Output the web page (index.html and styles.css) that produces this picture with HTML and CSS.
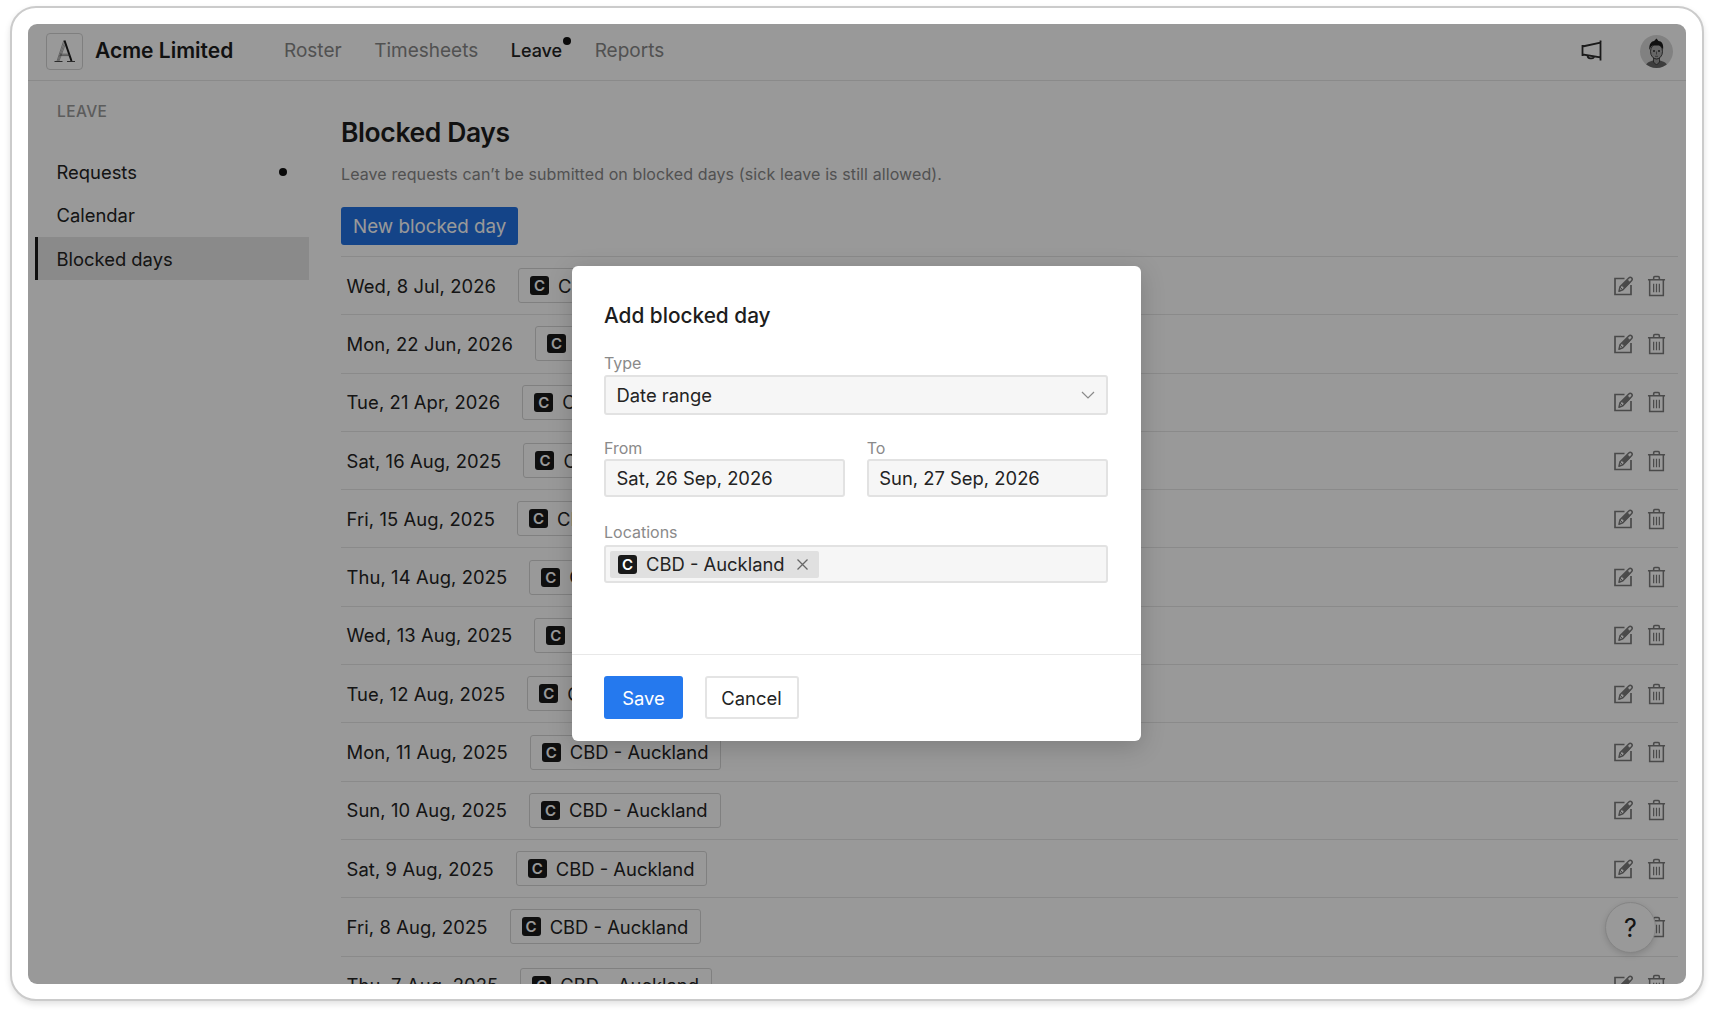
FILE: index.html
```html
<!DOCTYPE html>
<html lang="en">
<head>
<meta charset="utf-8">
<title>Blocked Days</title>
<link rel="stylesheet" href="styles.css">
</head>
<body>
<svg class="sprites" width="0" height="0">
  <symbol id="edit" viewBox="0 0 20 20">
    <path d="M10.500 2.500H1v16h16V9" fill="none" stroke="currentColor" stroke-width="1.700"/>
    <path d="M5 15.200l1-4.400L14.800 2c.9-.9 2-.9 2.800-.1.8.8.8 1.900-.1 2.800L8.900 13.700z" fill="none" stroke="currentColor" stroke-width="1.500" stroke-linejoin="round"/>
    <path d="M6 11l3 3M8 9.500l2.500 2.500 5.500-5.500-2.500-2.500z" fill="currentColor" stroke="currentColor" stroke-width="1"/>
  </symbol>
  <symbol id="trash" viewBox="0 0 20 22">
    <path d="M1 4.500h18M7 4.500V2.200C7 1.500 7.500 1 8.200 1h3.600c.7 0 1.200.5 1.200 1.200v2.300M2.800 4.500v16.500h14.400V4.500" fill="none" stroke="currentColor" stroke-width="1.600"/>
    <path d="M7 8.500v9M10 8.500v9M13 8.500v9" fill="none" stroke="currentColor" stroke-width="1.300"/>
  </symbol>
</svg>
<div class="frame">
  <div class="app">
    <header class="topbar">
      <div class="logo">
        <svg width="25" height="27" viewBox="0 0 25 27">
          <path d="M11.800 2.500L5 23M13.200 6.500L7 23M12.500 4.500L6 23" fill="none" stroke="#555" stroke-width=".5"/>
          <path d="M12.500 2.500L19.500 23" fill="none" stroke="#1c1c1c" stroke-width="2"/>
          <path d="M8 16.200h9.500M7.500 17.600h10.500" fill="none" stroke="#444" stroke-width=".6"/>
          <path d="M2.500 23.500h8M15 23.500h8" fill="none" stroke="#333" stroke-width=".9"/>
        </svg>
      </div>
      <div class="brand">Acme Limited</div>
      <nav class="nav">
        <a class="nav-link">Roster</a>
        <a class="nav-link">Timesheets</a>
        <a class="nav-link nav-current">Leave<span class="nav-dot"></span></a>
        <a class="nav-link">Reports</a>
      </nav>
      <svg class="megaphone" width="21" height="21" viewBox="0 0 21 21">
        <path d="M1.500 6.500L19.500 2.500v15L1.500 14.500zM1.500 5v11M19.500.5v20M6.500 15.800c.3 2.800 5 3.600 6.500 1.200" fill="none" stroke="#2c2c2c" stroke-width="1.800"/>
      </svg>
      <div class="avatar">
        <svg width="33" height="33" viewBox="0 0 33 33">
          <path d="M5 33c.5-5 4-6.500 8-7.500h7c4 1 7.500 2.500 8 7.500z" fill="#666"/>
          <path d="M13.500 22v5l3 3 3-3v-5z" fill="#999" stroke="#222" stroke-width=".7"/>
          <ellipse cx="16.500" cy="16.500" rx="6" ry="7.500" fill="#aaa" stroke="#222" stroke-width=".8"/>
          <path d="M9.500 15c-1-6 2.500-9 4.500-9l2.500-2.500 2 2.500c3 0 5.500 3 4.500 9-1-2.500-2-4-4-4.500h-6c-2 .5-2.500 2-3.500 4.500z" fill="#1c1c1c"/>
          <circle cx="14" cy="16" r=".9" fill="#222"/><circle cx="19" cy="16" r=".9" fill="#222"/>
          <path d="M16.500 16.500v3M15 21.300h3" stroke="#333" stroke-width=".6" fill="none"/>
        </svg>
      </div>
    </header>
    <div class="body">
      <aside class="sidebar">
        <div class="side-title">LEAVE</div>
        <a class="side-item">Requests<span class="side-dot"></span></a>
        <a class="side-item">Calendar</a>
        <a class="side-item side-active">Blocked days</a>
      </aside>
      <main class="main">
        <h1 class="title">Blocked Days</h1>
        <p class="subtitle">Leave requests can’t be submitted on blocked days (sick leave is still allowed).</p>
        <button class="new-btn">New blocked day</button>
        <div class="rows">
          <div class="row"><span class="date">Wed, 8 Jul, 2026</span><span class="tag"><b class="badge">C</b>CBD - Auckland</span><span class="actions"><svg class="ic-edit"><use href="#edit"/></svg><svg class="ic-trash"><use href="#trash"/></svg></span></div>
          <div class="row"><span class="date">Mon, 22 Jun, 2026</span><span class="tag"><b class="badge">C</b>CBD - Auckland</span><span class="actions"><svg class="ic-edit"><use href="#edit"/></svg><svg class="ic-trash"><use href="#trash"/></svg></span></div>
          <div class="row"><span class="date">Tue, 21 Apr, 2026</span><span class="tag"><b class="badge">C</b>CBD - Auckland</span><span class="actions"><svg class="ic-edit"><use href="#edit"/></svg><svg class="ic-trash"><use href="#trash"/></svg></span></div>
          <div class="row"><span class="date">Sat, 16 Aug, 2025</span><span class="tag"><b class="badge">C</b>CBD - Auckland</span><span class="actions"><svg class="ic-edit"><use href="#edit"/></svg><svg class="ic-trash"><use href="#trash"/></svg></span></div>
          <div class="row"><span class="date">Fri, 15 Aug, 2025</span><span class="tag"><b class="badge">C</b>CBD - Auckland</span><span class="actions"><svg class="ic-edit"><use href="#edit"/></svg><svg class="ic-trash"><use href="#trash"/></svg></span></div>
          <div class="row"><span class="date">Thu, 14 Aug, 2025</span><span class="tag"><b class="badge">C</b>CBD - Auckland</span><span class="actions"><svg class="ic-edit"><use href="#edit"/></svg><svg class="ic-trash"><use href="#trash"/></svg></span></div>
          <div class="row"><span class="date">Wed, 13 Aug, 2025</span><span class="tag"><b class="badge">C</b>CBD - Auckland</span><span class="actions"><svg class="ic-edit"><use href="#edit"/></svg><svg class="ic-trash"><use href="#trash"/></svg></span></div>
          <div class="row"><span class="date">Tue, 12 Aug, 2025</span><span class="tag"><b class="badge">C</b>CBD - Auckland</span><span class="actions"><svg class="ic-edit"><use href="#edit"/></svg><svg class="ic-trash"><use href="#trash"/></svg></span></div>
          <div class="row"><span class="date">Mon, 11 Aug, 2025</span><span class="tag"><b class="badge">C</b>CBD - Auckland</span><span class="actions"><svg class="ic-edit"><use href="#edit"/></svg><svg class="ic-trash"><use href="#trash"/></svg></span></div>
          <div class="row"><span class="date">Sun, 10 Aug, 2025</span><span class="tag"><b class="badge">C</b>CBD - Auckland</span><span class="actions"><svg class="ic-edit"><use href="#edit"/></svg><svg class="ic-trash"><use href="#trash"/></svg></span></div>
          <div class="row"><span class="date">Sat, 9 Aug, 2025</span><span class="tag"><b class="badge">C</b>CBD - Auckland</span><span class="actions"><svg class="ic-edit"><use href="#edit"/></svg><svg class="ic-trash"><use href="#trash"/></svg></span></div>
          <div class="row"><span class="date">Fri, 8 Aug, 2025</span><span class="tag"><b class="badge">C</b>CBD - Auckland</span><span class="actions"><svg class="ic-edit"><use href="#edit"/></svg><svg class="ic-trash"><use href="#trash"/></svg></span></div>
          <div class="row"><span class="date">Thu, 7 Aug, 2025</span><span class="tag"><b class="badge">C</b>CBD - Auckland</span><span class="actions"><svg class="ic-edit"><use href="#edit"/></svg><svg class="ic-trash"><use href="#trash"/></svg></span></div>
        </div>
      </main>
    </div>
    <button class="help">?</button>
    <div class="overlay">
      <section class="modal">
        <div class="modal-body">
          <h2 class="modal-title">Add blocked day</h2>
          <label class="field-label">Type</label>
          <div class="control control-select">Date range
            <svg class="chevron" width="14" height="8" viewBox="0 0 14 8"><path d="M1 1l6 6 6-6" fill="none" stroke="#8a8a8a" stroke-width="1.200"/></svg>
          </div>
          <div class="two-col">
            <div class="col">
              <label class="field-label field-date">From</label>
              <div class="control control-date">Sat, 26 Sep, 2026</div>
            </div>
            <div class="col">
              <label class="field-label field-date">To</label>
              <div class="control control-date">Sun, 27 Sep, 2026</div>
            </div>
          </div>
          <label class="field-label field-loc">Locations</label>
          <div class="control control-multi">
            <span class="chip"><b class="badge">C</b>CBD - Auckland
              <svg class="chip-x" width="13" height="13" viewBox="0 0 13 13"><path d="M1.500 1.500l10 10M11.500 1.500l-10 10" fill="none" stroke="#666" stroke-width="1.300"/></svg>
            </span>
          </div>
        </div>
        <footer class="modal-foot">
          <button class="btn-save">Save</button>
          <button class="btn-cancel">Cancel</button>
        </footer>
      </section>
    </div>
  </div>
</div>
</body>
</html>
```
FILE: styles.css
```css
* { box-sizing: border-box; }
html, body { margin: 0; height: 100%; }
body {
  background: #fff;
  font-family: Inter, "Liberation Sans", sans-serif;
  font-size: 18.4px;
  color: #232323;
  padding: 6px 11px 15px 10px;
  overflow: hidden;
}
.sprites { position: absolute; }
.frame {
  height: 995px;
  border: 2px solid #cbcbcb;
  border-radius: 26px;
  padding: 16px 16px 15px 16px;
  box-shadow: 0 3px 6px rgba(0,0,0,.12);
  background: #fff;
}
.app {
  position: relative;
  height: 960px;
  border-radius: 9px;
  overflow: hidden;
  background: #fff;
  display: flex;
  flex-direction: column;
}
.topbar {
  flex: none;
  height: 57px;
  border-bottom: 1px solid #e6e6e6;
  display: flex;
  align-items: center;
  padding: 0 13px 1px 18px;
}
.logo {
  width: 37px;
  height: 37px;
  border: 1px solid #d4d4d4;
  border-radius: 4px;
  display: flex;
  align-items: center;
  justify-content: center;
}
.brand { margin-left: 12px; padding-bottom: 3px; font-size: 21px; font-weight: 600; width: 139px; white-space: nowrap; color: #1d1d1d; }
.nav { display: flex; gap: 32.500px; margin-left: 50px; padding-bottom: 3px; flex: 1; font-size: 19px; }
.nav-link { position: relative; color: #888; }
.nav-current { color: #232323; font-weight: 500; font-size: 18px; line-height: 23px; }
.nav-dot {
  position: absolute;
  right: -9px;
  top: -2px;
  width: 8px;
  height: 8px;
  border-radius: 50%;
  background: #111;
}
.megaphone { margin: 0 38px 2px 0; }
.avatar { width: 33px; height: 33px; border-radius: 50%; background: #d8d8d8; overflow: hidden; }
.avatar svg { display: block; }
.body { flex: 1; display: flex; min-height: 0; }
.sidebar { flex: none; width: 313px; padding: 20px 0 0 7px; }
.side-title { padding-left: 22px; font-size: 15.500px; font-weight: 500; line-height: 22px; color: #999; margin-bottom: 27.500px; letter-spacing: .4px; }
.side-item {
  width: 274px;
  height: 43.300px;
  padding-left: 21.500px;
  display: flex;
  align-items: center;
  justify-content: space-between;
  padding-right: 22px;
}
.side-dot { width: 8px; height: 8px; border-radius: 50%; background: #111; }
.side-active { background: #e6e6e6; border-left: 3px solid #1a1a1a; padding-left: 18.500px; }
.main { flex: 1; min-width: 0; padding: 33px 8px 0 0; display: flex; flex-direction: column; }
.main > * { flex: none; }
.title { margin: 0; font-size: 26.500px; line-height: 36px; font-weight: 600; letter-spacing: -.4px; color: #1d1d1d; }
.subtitle { margin: 13px 0 0; font-size: 16px; line-height: 22px; color: #888; letter-spacing: .1px; }
.new-btn {
  align-self: flex-start;
  margin-top: 22px;
  height: 38px;
  padding: 0 12px;
  border: 0;
  border-radius: 3px;
  background: #2272e3;
  color: #fff;
  font: inherit;
  font-size: 18.800px;
}
.rows { margin-top: 11px; }
.row {
  height: 58.300px;
  border-top: 1px solid #e6e6e6;
  display: flex;
  align-items: center;
  padding-left: 5.500px;
}
.date { white-space: nowrap; letter-spacing: .1px; }
.tag {
  margin-left: 22px;
  height: 35px;
  padding: 0 12px 0 11px;
  border: 1px solid #d6d6d6;
  border-radius: 3px;
  display: flex;
  align-items: center;
  white-space: nowrap;
}
.badge {
  width: 19px;
  height: 19px;
  margin-right: 9px;
  border-radius: 3px;
  background: #1a1a1a;
  color: #fff;
  font-size: 15px;
  font-weight: 600;
  display: flex;
  align-items: center;
  justify-content: center;
}
.actions { margin-left: auto; display: flex; align-items: center; gap: 13px; padding-right: 12px; color: #7c7c7c; }
.ic-edit { width: 20px; height: 20px; }
.ic-trash { width: 19px; height: 22px; }
.help {
  position: absolute;
  left: 1577px;
  top: 878px;
  width: 51px;
  height: 51px;
  border-radius: 50%;
  border: 1px solid #ddd;
  background: #fff;
  box-shadow: 0 2px 6px rgba(0,0,0,.15);
  font: 400 25px Inter, sans-serif;
  color: #222;
  padding: 0;
}
.overlay {
  position: absolute;
  inset: 0;
  background: rgba(0,0,0,.4);
  display: flex;
  justify-content: center;
  padding: 242px 2px 0 0;
}
.modal {
  width: 569px;
  height: 475px;
  background: #fff;
  border-radius: 6px;
  box-shadow: 0 6px 24px rgba(0,0,0,.18);
  display: flex;
  flex-direction: column;
}
.modal-body { flex: 1; padding: 35px 33px 0 32.500px; }
.modal-title { margin: 0 0 22px; font-size: 20.800px; line-height: 30px; font-weight: 500; color: #1d1d1d; }
.field-label { display: block; font-size: 16px; line-height: 20px; color: #8a8a8a; margin-bottom: 2px; }
.field-date { margin-bottom: 1px; }
.control {
  border: 2px solid #e2e2e2;
  border-radius: 3px;
  background: #f6f6f6;
  padding: 0 10px 0 10.500px;
  display: flex;
  align-items: center;
}
.control-select { height: 40px; justify-content: space-between; margin-bottom: 23px; }
.chevron { margin-right: 1px; }
.two-col { display: flex; gap: 22px; }
.col { flex: 1; }
.control-date { height: 38px; }
.field-loc { margin: 25px 0 3px; }
.control-multi { height: 38px; padding: 0 4px; }
.chip {
  height: 27px;
  padding: 0 10px 0 8px;
  border-radius: 2px;
  background: #e0e0e0;
  display: flex;
  align-items: center;
  white-space: nowrap;
}
.chip-x { margin-left: 11px; }
.modal-foot {
  flex: none;
  height: 87px;
  border-top: 1px solid #e8e8e8;
  padding: 21px 33px 0 32.500px;
  display: flex;
  align-items: flex-start;
  gap: 21.500px;
}
.btn-save, .btn-cancel { height: 43px; border-radius: 3px; font: inherit; }
.btn-save { width: 79px; border: 0; background: #2579ee; color: #fff; }
.btn-cancel { width: 94px; border: 2px solid #e4e4e4; background: #fff; color: #232323; }
```
